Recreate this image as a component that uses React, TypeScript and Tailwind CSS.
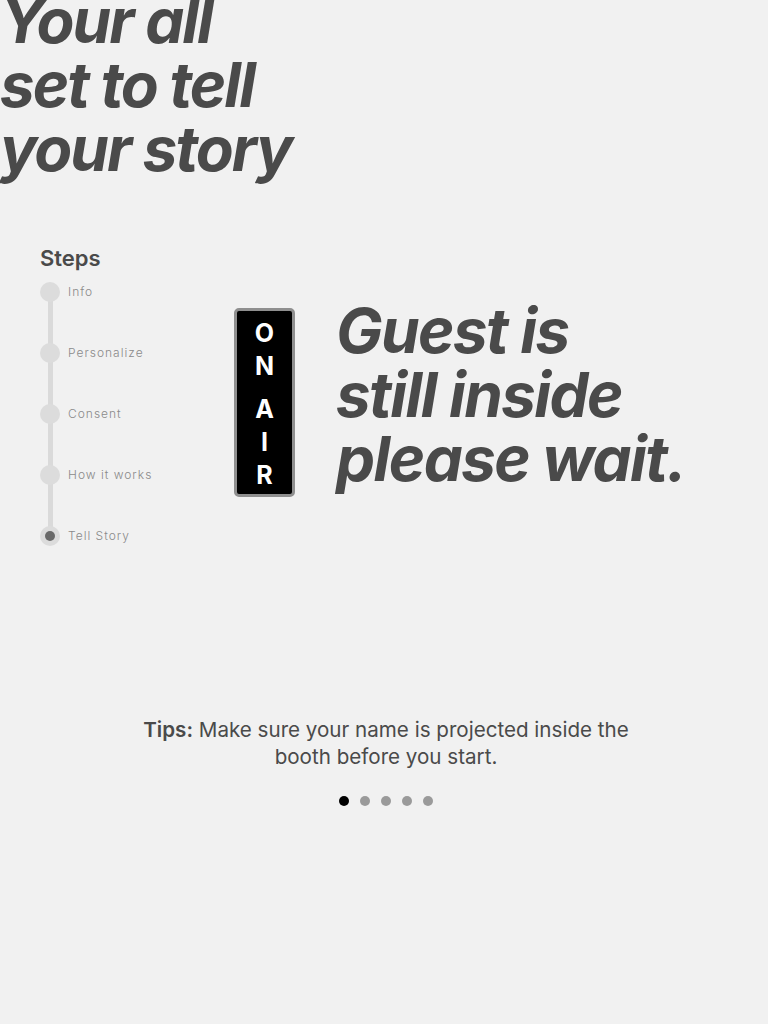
const steps = ["Info", "Personalize", "Consent", "How it works", "Tell Story"];

function OnAir() {
  return (
    <div className="mt-[14px] flex h-[189px] w-[61px] flex-col items-center rounded-[5px] border-[3px] border-[#8f8f8f] bg-black pt-[6px] text-[25px] font-bold leading-[33px] text-white">
      <span>O</span>
      <span>N</span>
      <span className="h-[10px]" />
      <span>A</span>
      <span>I</span>
      <span>R</span>
    </div>
  );
}

function Steps() {
  return (
    <div className="w-[194px] shrink-0">
      <h2 className="text-[22px] font-semibold leading-[28px] text-[#4a4a4a]">Steps</h2>
      <div className="relative mt-[10px]">
        <div className="absolute left-[8px] top-[10px] h-[244px] w-[5px] bg-[#dadada]" />
        <ul className="relative flex flex-col gap-[41px]">
          {steps.map((s, i) => {
            const active = i === steps.length - 1;
            return (
              <li key={s} className="flex h-[20px] items-center gap-[8px]">
                <span className="flex size-[20px] items-center justify-center rounded-full bg-[#dcdcdc]">
                  {active && <span className="size-[10px] rounded-full bg-[#6a6a6a]" />}
                </span>
                <span className="text-[12px] font-light tracking-[1px] text-[#8a8a8a]">{s}</span>
              </li>
            );
          })}
        </ul>
      </div>
    </div>
  );
}

export default function App() {
  return (
    <main
      className="min-h-screen overflow-hidden bg-[#f1f1f1] text-[#4a4a4a]"
      style={{ fontFamily: "Inter, 'Noto Sans', sans-serif" }}
    >
      <h1 className="-mt-[11px] text-[62px] font-bold italic leading-[64px] tracking-[-2px]">
        Your all
        <br />
        set to tell
        <br />
        your story
      </h1>

      <section className="mt-[63px] flex items-center pl-[40px]">
        <Steps />
        <OnAir />
        <p className="ml-[41px] text-[62px] font-bold italic leading-[64px] tracking-[-1.6px]">
          Guest is
          <br />
          still inside
          <br />
          please wait.
        </p>
      </section>

      <section className="mt-[170px] flex flex-col items-center pl-[4px]">
        <p className="max-w-[520px] text-center text-[20.6px] leading-[27px]">
          <strong className="font-semibold">Tips:</strong> Make sure your name is projected inside the booth before you start.
        </p>
        <div className="mt-[26px] flex gap-[11px]">
          {[0, 1, 2, 3, 4].map((d) => (
            <span key={d} className={d === 0 ? "size-[10px] rounded-full bg-black" : "size-[10px] rounded-full bg-[#9a9a9a]"} />
          ))}
        </div>
      </section>
    </main>
  );
}
